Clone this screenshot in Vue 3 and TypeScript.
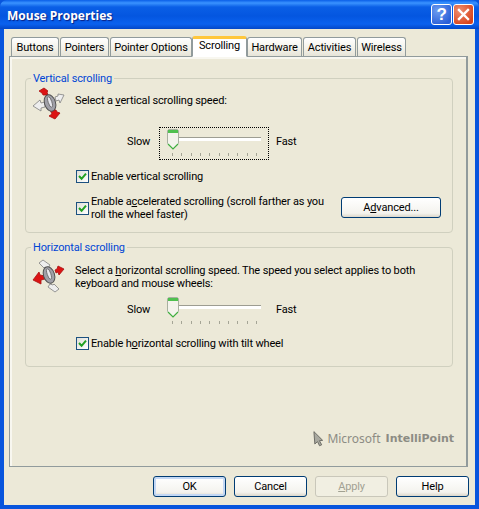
<script setup lang="ts">
const tabs = ['Buttons', 'Pointers', 'Pointer Options', 'Scrolling', 'Hardware', 'Activities', 'Wireless']
const tabWidths = [48, 49, 82, 55, 55, 53, 49]
const ticks = Array.from({ length: 10 }, (_, i) => Math.round(5 + i * 9.35))
</script>

<template>
  <div class="win">
    <header class="titlebar">
      <span class="title">Mouse Properties</span>
      <span class="caps">
        <span class="cap help">?</span>
        <span class="cap close">
          <svg width="13" height="13" viewBox="0 0 13 13"><path d="M2 2l9 9M11 2l-9 9" stroke="#fff" stroke-width="2.4" stroke-linecap="square" /></svg>
        </span>
      </span>
    </header>

    <div class="client">
      <nav class="tabs">
        <span
          v-for="(t, i) in tabs"
          :key="t"
          class="tab"
          :class="{ active: t === 'Scrolling' }"
          :style="{ width: tabWidths[i] + 'px' }"
        >{{ t }}</span>
      </nav>

      <section class="panel">
        <fieldset class="group vertical">
          <legend>Vertical scrolling</legend>
          <div class="row">
            <svg class="mouse" width="34" height="34" viewBox="0 0 34 34">
              <g stroke="#808080" stroke-width=".8">
                <path d="M7 5l5-3 4 3-1 1 1 3-5 0-1-2z" fill="#dc1414" stroke="#a81010" />
                <path d="M23 33l-6-3 3-2-2-4 6 0 1 2 3 1z" fill="#dc1414" stroke="#a81010" />
                <path d="M1 20l7-6 1 3 4-1 0 5-4 1 0 3z" fill="#eeeeee" />
                <path d="M32 9l-6-1 0 2-3 1 1 4 3-1 1 3z" fill="#eeeeee" />
              </g>
              <ellipse cx="18" cy="17" rx="5.5" ry="8.5" transform="rotate(-18 18 17)" fill="#a0a0a8" stroke="#4f4f4f" />
              <ellipse cx="18" cy="16" rx="1.8" ry="5.5" transform="rotate(-18 18 16)" fill="#e8e8ee" stroke="#666" stroke-width=".8" />
            </svg>
            <p class="label"><span>Select a <u>v</u>ertical scrolling speed:</span></p>
          </div>
          <div class="slider-row first">
            <span class="end slow">Slow</span>
            <div class="slider focus">
              <i class="track"></i>
              <i class="thumb">
                <svg width="12" height="21" viewBox="0 0 12 21">
                  <path d="M1.5.5h9l1 1v13l-5.5 5.5-5.5-5.5v-13z" fill="#f4f3ec" stroke="#a8b0a0" />
                  <path d="M1 1h10v3H1z" fill="#4fc04f" />
                  <path d="M1 15l5 5 5-5" fill="none" stroke="#3fae3f" stroke-width="1.2" />
                </svg>
              </i>
              <i v-for="x in ticks" :key="x" class="tick" :style="{ left: x + 'px' }"></i>
            </div>
            <span class="end">Fast</span>
          </div>
          <label class="check one">
            <span class="box"><svg width="9" height="9" viewBox="0 0 9 9"><path d="M1 4l2.6 2.8L8 1.6" fill="none" stroke="#21a121" stroke-width="2" /></svg></span>
            <span>Enable vertical scrolling</span>
          </label>
          <div class="accel">
            <label class="check centered">
              <span class="box"><svg width="9" height="9" viewBox="0 0 9 9"><path d="M1 4l2.6 2.8L8 1.6" fill="none" stroke="#21a121" stroke-width="2" /></svg></span>
              <span>Enable a<u>c</u>celerated scrolling (scroll farther as you<br />roll the wheel faster)</span>
            </label>
            <button class="btn advanced" type="button">A<u>d</u>vanced...</button>
          </div>
        </fieldset>

        <fieldset class="group horizontal">
          <legend>Horizontal scrolling</legend>
          <div class="row">
            <svg class="mouse" width="34" height="34" viewBox="0 0 34 34">
              <g stroke="#808080" stroke-width=".8">
                <path d="M7 4l4-3 7 5-2 3-3-1-1 1z" fill="#eeeeee" />
                <path d="M27 30l-4 3-7-5 2-3 3 1 1-1z" fill="#eeeeee" />
                <path d="M1 21l6-8 1 3 5 1 0 3-4 1 0 4z" fill="#dc1414" stroke="#a81010" />
                <path d="M32 10l-6-3-1 3-2 1 1 3 2-1 1 3z" fill="#dc1414" stroke="#a81010" />
              </g>
              <ellipse cx="17" cy="16" rx="5.5" ry="8.5" transform="rotate(-18 17 16)" fill="#a0a0a8" stroke="#4f4f4f" />
              <ellipse cx="17" cy="15" rx="1.8" ry="5.5" transform="rotate(-18 17 15)" fill="#e8e8ee" stroke="#666" stroke-width=".8" />
            </svg>
            <p class="label">Select a <u>h</u>orizontal scrolling speed. The speed you select applies to both<br />keyboard and mouse wheels:</p>
          </div>
          <div class="slider-row second">
            <span class="end slow">Slow</span>
            <div class="slider">
              <i class="track"></i>
              <i class="thumb">
                <svg width="12" height="21" viewBox="0 0 12 21">
                  <path d="M1.5.5h9l1 1v13l-5.5 5.5-5.5-5.5v-13z" fill="#f4f3ec" stroke="#a8b0a0" />
                  <path d="M1 1h10v3H1z" fill="#4fc04f" />
                  <path d="M1 15l5 5 5-5" fill="none" stroke="#3fae3f" stroke-width="1.2" />
                </svg>
              </i>
              <i v-for="x in ticks" :key="x" class="tick" :style="{ left: x + 'px' }"></i>
            </div>
            <span class="end">Fast</span>
          </div>
          <label class="check three">
            <span class="box"><svg width="9" height="9" viewBox="0 0 9 9"><path d="M1 4l2.6 2.8L8 1.6" fill="none" stroke="#21a121" stroke-width="2" /></svg></span>
            <span>Enable h<u>o</u>rizontal scrolling with tilt wheel</span>
          </label>
        </fieldset>

        <div class="brand">
          <svg width="11" height="17" viewBox="0 0 12 17"><path d="M1 1l9.5 9.5-3.5.4 2.5 4.5-2.4 1-2.2-4.5L2 14.5z" fill="#a9a9a0" stroke="#66665f" /></svg>
          <span class="ms">Microsoft</span>
          <b>IntelliPoint</b>
        </div>
      </section>

      <footer class="actions">
        <button class="btn default" type="button">OK</button>
        <button class="btn" type="button">Cancel</button>
        <button class="btn disabled" type="button"><u>A</u>pply</button>
        <button class="btn" type="button">Help</button>
      </footer>
    </div>
  </div>
</template>

<style>
html, body { margin: 0; background: #ece9d8; }
</style>

<style scoped>
.win {
  width: 479px;
  height: 509px;
  display: flex;
  flex-direction: column;
  overflow: hidden;
  font: 11px Roboto, "Liberation Sans", Arial, sans-serif;
  letter-spacing: -0.15px;
  color: #000;
  background: #0855dd;
}
.titlebar {
  height: 29px;
  box-sizing: border-box;
  flex: none;
  display: flex;
  align-items: center;
  justify-content: space-between;
  padding: 1px 5px 0 7px;
  border-radius: 7px 7px 0 0;
  background: linear-gradient(#0a5fe8 0, #3a93ff 3px, #0a5fe6 7px, #0456e0 16px, #0a61ee 24px, #0347c8 29px);
}
.title {
  color: #fff;
  font: bold 12px "Open Sans", sans-serif;
  letter-spacing: 0;
  padding-top: 1px;
  text-shadow: 1px 1px 1px #0a1f80;
}
.caps { display: flex; gap: 1px; margin-top: -1px; }
.cap {
  width: 21px;
  height: 21px;
  box-sizing: border-box;
  border: 1px solid #fff;
  border-radius: 3px;
  display: flex;
  align-items: center;
  justify-content: center;
  color: #fff;
  font: bold 17px "Liberation Sans", sans-serif;
}
.help { background: radial-gradient(circle at 30% 30%, #6d9df0, #2a5fd8 80%); }
.close { background: radial-gradient(circle at 30% 30%, #ee8e70, #d8431c 80%); }

.client {
  flex: 1;
  margin: 0 4px 4px;
  background: #ece9d8;
  display: flex;
  flex-direction: column;
  padding: 0 6px 8px 5px;
  min-height: 0;
}
.tabs {
  height: 28px;
  flex: none;
  display: flex;
  align-items: flex-end;
  padding-left: 2px;
  gap: 1px;
  position: relative;
  z-index: 1;
  margin-bottom: -1px;
}
.tab {
  height: 19px;
  margin-bottom: 1px;
  box-sizing: border-box;
  border: 1px solid #919b9c;
  border-bottom: none;
  border-radius: 3px 3px 0 0;
  background: linear-gradient(#fff, #f3f1e8 60%, #e6e4d8);
  text-align: center;
  line-height: 19px;
  white-space: nowrap;
}
.tab.active {
  height: 21px;
  margin: 0 -1px;
  background: #fff;
  border-top: 3px solid #ffc73c;
  border-bottom: 1px solid #fff;
  line-height: 14px;
  width: 55px;
}
.panel {
  width: 459px;
  height: 411px;
  box-sizing: border-box;
  flex: none;
  border: 1px solid #919b9c;
  border-right-width: 2px;
  background: #ece9d8;
  box-shadow: inset 2px 2px 0 #f8f7f0;
  padding: 14px 13px 0 15px;
  display: flex;
  flex-direction: column;
}
.group {
  margin: 0;
  padding: 0;
  border: 1px solid #d0d0bf;
  border-radius: 4px;
  min-width: 0;
}
.group legend {
  color: #0046d5;
  margin-left: 5px;
  padding: 0 2px;
  line-height: 14px;
  transform: translateY(1px);
}
.vertical { height: 162px; box-sizing: border-box; }
.horizontal { height: 127px; box-sizing: border-box; margin-top: 7px; }
.row {
  display: flex;
  align-items: flex-start;
  padding-left: 6px;
  height: 32px;
  position: relative;
}
.mouse { flex: none; margin-top: 1px; }
.horizontal .mouse { margin-top: 5px; }
.label { margin: 9px 0 0 9px; line-height: 13px; white-space: nowrap; }
.horizontal .label { margin-top: 10px; }
.slider-row {
  display: flex;
  align-items: flex-start;
  padding-left: 101px;
}
.first { margin-top: 11px; }
.second { margin-top: 10px; }
.end { line-height: 14px; margin-top: 7px; }
.slow { width: 32px; }
.slider {
  width: 110px;
  height: 33px;
  position: relative;
  box-sizing: border-box;
  margin-right: 7px;
  margin-top: -1px;
}
.focus { outline: 1px dotted #000; outline-offset: -1px; }
.track {
  position: absolute;
  left: 13px;
  top: 10px;
  width: 89px;
  height: 2px;
  background: #fff;
  border-top: 1px solid #9d9d92;
  border-bottom: 1px solid #fff;
}
.thumb { position: absolute; left: 8px; top: 2px; line-height: 0; }
.tick {
  position: absolute;
  top: 26px;
  width: 1px;
  height: 3px;
  margin-left: 8px;
  background: #a5a596;
}
.check {
  display: flex;
  align-items: flex-start;
  gap: 2px;
  line-height: 13px;
  white-space: nowrap;
}
.centered { align-items: center; }
.box {
  width: 13px;
  height: 13px;
  box-sizing: border-box;
  flex: none;
  border: 1px solid #1c5180;
  background: linear-gradient(135deg, #e0e0d8, #fff);
  display: flex;
  align-items: center;
  justify-content: center;
}
.one { margin: 10px 0 0 50px; }
.three { margin: 9px 0 0 50px; }
.accel {
  display: flex;
  align-items: flex-start;
  justify-content: space-between;
  margin: 12px 11px 0 50px;
}
.btn {
  width: 73px;
  height: 21px;
  padding: 0;
  box-sizing: border-box;
  border: 1px solid #003c74;
  border-radius: 3px;
  background: linear-gradient(#fff, #f4f3ee 80%, #dcd7ca);
  font: inherit;
  letter-spacing: inherit;
  color: #000;
}
.advanced { width: 100px; margin-top: 2px; }
.default { box-shadow: inset 0 0 0 2px #c4d8f4; }
.disabled { border-color: #c9c7ba; color: #a1a192; background: #f1efe2; }
.brand {
  margin-top: auto;
  margin-bottom: 19px;
  margin-right: -1px;
  display: flex;
  align-items: center;
  justify-content: flex-end;
  color: #8c8c84;
  font-size: 12px;
  letter-spacing: 0;
}
.brand svg { margin-right: 3px; }
.ms { font-family: "Noto Sans", sans-serif; margin-right: 5px; }
.brand b { font-family: "DejaVu Sans", sans-serif; font-size: 11px; }
.actions {
  margin-top: 9px;
  display: flex;
  justify-content: flex-end;
  gap: 8px;
}
</style>
